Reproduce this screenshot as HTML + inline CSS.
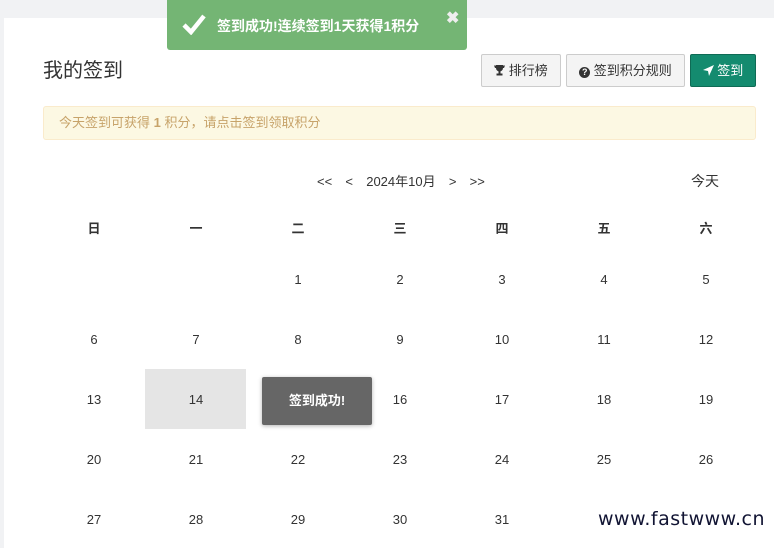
<!DOCTYPE html>
<html><head><meta charset="utf-8"><style>
*{margin:0;padding:0;box-sizing:border-box}
body{width:774px;height:537px;overflow:hidden;background:#f1f2f4;font-family:"Liberation Sans","Noto Sans CJK SC",sans-serif;position:relative;color:#333}
.panel{position:absolute;left:4px;top:18px;width:770px;height:530px;background:#fff}
.abs{position:absolute}
h1{position:absolute;left:43px;top:54px;font-size:20px;font-weight:normal;color:#333}
.btn{position:absolute;top:54px;height:33px;border:1px solid #ccc;background:#f4f4f4;border-radius:2px;font-size:13px;line-height:31px;text-align:center;color:#333}
.alert{position:absolute;left:43px;top:106px;width:713px;height:34px;background:#fcf8e3;border:1px solid #faebcc;border-radius:3px;color:#c7a36a;font-size:13px;line-height:32px;padding-left:15px}
.toast{position:absolute;left:167px;top:0;width:300px;height:50px;background:#74b574;border-radius:0 0 3px 3px;color:#fff;font-size:14px}
.cal div{position:absolute;width:102px;text-align:center;font-size:13px;color:#333}
.tip{position:absolute;left:262px;top:377px;width:110px;height:48px;background:#666;border-radius:2px;color:#fff;font-size:13px;font-weight:bold;text-align:center;line-height:48px;box-shadow:0 1px 4px rgba(0,0,0,.3)}
</style></head><body>
<div class="panel"></div>
<h1>我的签到</h1>
<div class="btn" style="left:481px;width:80px"><svg width="11" height="12" viewBox="0 0 11 12" style="vertical-align:-1px"><path d="M2 1h7v3a3.5 3.5 0 0 1-7 0z M0 1.5h2v2.5h-1z M9 1.5h2l-1 2.5h-1z M4.5 7h2v2.5h-2z M2.5 9.5h6v2h-6z" fill="#333"/></svg> 排行榜</div>
<div class="btn" style="left:566px;width:119px"><span style="display:inline-block;width:11px;height:11px;border-radius:50%;background:#333;color:#fff;font-size:9px;line-height:11px;font-weight:bold;vertical-align:0px">?</span> 签到积分规则</div>
<div class="btn" style="left:690px;width:66px;background:#148b6f;border-color:#0f6b55;color:#fff"><svg width="11" height="11" viewBox="0 0 11 11" style="vertical-align:-1px"><path d="M11 0 L0 5 L5 6 L6 11 Z" fill="#fff"/></svg> 签到</div>
<div class="alert">今天签到可获得 <b>1</b> 积分，请点击签到领取积分</div>
<div class="toast">
<svg class="abs" style="left:14px;top:13px" width="26" height="22" viewBox="0 0 26 22"><path d="M3 12 L10 19 L23 3" stroke="#fff" stroke-width="4.5" fill="none"/></svg>
<span class="abs" style="left:50px;top:16px;font-weight:bold">签到成功!连续签到1天获得1积分</span>
<span class="abs" style="left:279px;top:8px;font-size:16px;font-weight:bold;color:#eee">&#10006;</span>
</div>
<div class="abs" style="left:317px;top:171px;font-size:13px;color:#333;word-spacing:3px">&lt;&lt; &nbsp;&lt; &nbsp;2024年10月 &nbsp;&gt; &nbsp;&gt;&gt;</div>
<div class="abs" style="left:691px;top:171px;font-size:14px;color:#333">今天</div>
<div class="abs" style="left:145px;top:369px;width:101px;height:60px;background:#e5e5e5"></div>
<div class="cal">
<div style="left:43px;top:218px;font-weight:bold">日</div><div style="left:145px;top:218px;font-weight:bold">一</div><div style="left:247px;top:218px;font-weight:bold">二</div><div style="left:349px;top:218px;font-weight:bold">三</div><div style="left:451px;top:218px;font-weight:bold">四</div><div style="left:553px;top:218px;font-weight:bold">五</div><div style="left:655px;top:218px;font-weight:bold">六</div>
<div style="left:247px;top:272px">1</div><div style="left:349px;top:272px">2</div><div style="left:451px;top:272px">3</div><div style="left:553px;top:272px">4</div><div style="left:655px;top:272px">5</div>
<div style="left:43px;top:332px">6</div><div style="left:145px;top:332px">7</div><div style="left:247px;top:332px">8</div><div style="left:349px;top:332px">9</div><div style="left:451px;top:332px">10</div><div style="left:553px;top:332px">11</div><div style="left:655px;top:332px">12</div>
<div style="left:43px;top:392px">13</div><div style="left:145px;top:392px">14</div><div style="left:349px;top:392px">16</div><div style="left:451px;top:392px">17</div><div style="left:553px;top:392px">18</div><div style="left:655px;top:392px">19</div>
<div style="left:43px;top:452px">20</div><div style="left:145px;top:452px">21</div><div style="left:247px;top:452px">22</div><div style="left:349px;top:452px">23</div><div style="left:451px;top:452px">24</div><div style="left:553px;top:452px">25</div><div style="left:655px;top:452px">26</div>
<div style="left:43px;top:512px">27</div><div style="left:145px;top:512px">28</div><div style="left:247px;top:512px">29</div><div style="left:349px;top:512px">30</div><div style="left:451px;top:512px">31</div>
</div>
<div class="tip">签到成功!</div>
<div class="abs" style="left:598px;top:508px;font-size:19px;color:#111433;font-family:'DejaVu Sans',sans-serif;letter-spacing:0.5px">www.fastwww.cn</div>
</body></html>
